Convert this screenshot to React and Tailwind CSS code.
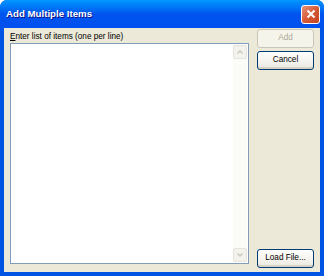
import React from "react"

const XpButton = ({ children, disabled }) => (
  <button
    type="button"
    disabled={disabled}
    className={`flex h-[19px] w-[57px] items-center justify-center rounded-[3px] border text-[8.2px] leading-none ${
      disabled
        ? "border-[#c9c7ba] bg-[#f5f4ea] text-[#aca899]"
        : "border-[#003c74] bg-gradient-to-b from-[#ffffff] to-[#ece9e0] text-black shadow-[inset_0_-2px_0_#d6d0c5]"
    }`}
  >
    {children}
  </button>
)

const Arrow = ({ up }) => (
  <div className="flex h-[14px] w-[14px] items-center justify-center rounded-[2px] border border-[#e5e4dc] bg-[#f3f2ec]">
    <svg width="6" height="4" viewBox="0 0 6 4">
      <path
        d={up ? "M0.5 3.5 L3 1 L5.5 3.5" : "M0.5 0.5 L3 3 L5.5 0.5"}
        fill="none"
        stroke="#c9c7ba"
        strokeWidth="1.3"
      />
    </svg>
  </div>
)

export default function App() {
  return (
    <div
      className="flex h-[276px] w-[324px] flex-col overflow-hidden rounded-t-[7px] bg-[#0054e3]"
      style={{ fontFamily: "'Liberation Sans', Arial, sans-serif" }}
    >
      {/* title bar */}
      <div className="flex h-[28px] shrink-0 items-center justify-between bg-gradient-to-b from-[#0997ff] via-[#0053ee] to-[#0050ee] pl-[6px] pr-[4px]">
        <span className="text-[9.7px] font-bold text-white [text-shadow:1px_1px_0_#0f1089]">
          Add Multiple Items
        </span>
        <div className="flex h-[19px] w-[19px] items-center justify-center rounded-[3px] border border-white bg-gradient-to-br from-[#e5927b] via-[#d65a36] to-[#c2431f]">
          <svg width="10" height="10" viewBox="0 0 10 10">
            <path d="M1.5 1.5 L8.5 8.5 M8.5 1.5 L1.5 8.5" stroke="white" strokeWidth="2" />
          </svg>
        </div>
      </div>

      {/* client */}
      <div className="mx-[4px] mb-[4px] flex flex-1 gap-[8px] bg-[#ece9d8] pl-[6px] pr-[6px] pt-[1px] pb-[4px]">
        <div className="flex flex-1 flex-col pt-[3px] pb-[4px]">
          <label className="mb-[1px] h-[10px] text-[8.2px] leading-[10px] text-black">
            <span className="underline">E</span>nter list of items (one per line)
          </label>
          <div className="flex flex-1 border border-[#7f9db9] bg-white p-[1px]">
            <div className="flex-1" />
            <div className="flex w-[14px] flex-col justify-between bg-[#fbfbf8]">
              <Arrow up />
              <Arrow />
            </div>
          </div>
        </div>
        <div className="flex flex-col justify-between">
          <div className="flex flex-col gap-[3px]">
            <XpButton disabled>Add</XpButton>
            <XpButton>Cancel</XpButton>
          </div>
          <XpButton>Load File...</XpButton>
        </div>
      </div>
    </div>
  )
}
